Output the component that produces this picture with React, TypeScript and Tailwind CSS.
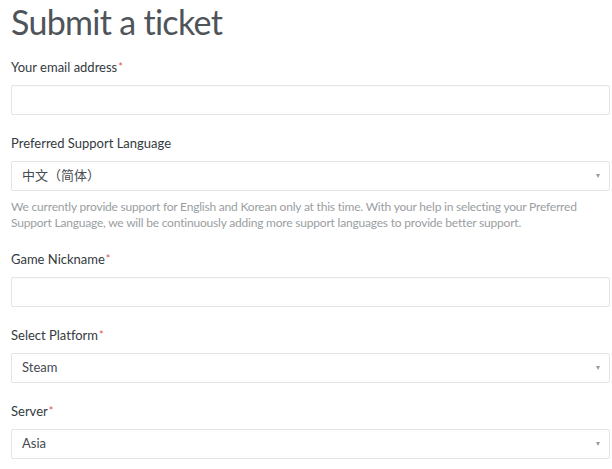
import React from 'react';

const font = { fontFamily: 'Lato, "Noto Sans CJK SC", sans-serif', fontVariantLigatures: 'none' as const };

function Label({ text, required }: { text: string; required?: boolean }) {
  return (
    <label className="block h-[20px] text-[13px] leading-[20px] text-[#333a40] mb-[8px]">
      {text}
      {required && <span className="text-[#e0545a] text-[11px] align-top ml-[1px]">*</span>}
    </label>
  );
}

function TextBox() {
  return (
    <input
      type="text"
      className="block w-full h-[30px] border border-[#e4e4e4] rounded-[2px] bg-white outline-none shadow-[inset_0_1px_1px_rgba(0,0,0,0.02)]"
    />
  );
}

function SelectBox({ value }: { value: string }) {
  return (
    <div className="flex items-center justify-between w-full h-[30px] border border-[#e4e4e4] rounded-[2px] bg-white pl-[10px] pr-[9px]">
      <span className="text-[13px] text-[#444a50]">{value}</span>
      <span className="w-0 h-0 border-l-[2.5px] border-r-[2.5px] border-t-[4px] border-l-transparent border-r-transparent border-t-[#9a9a9a]" />
    </div>
  );
}

export default function App() {
  return (
    <div className="bg-white w-[612px] h-[469px] overflow-hidden pl-[11px] pr-[2px]" style={font}>
      <h1 className="text-[34px] leading-[44px] tracking-[-0.7px] text-[#4e5459] font-normal pt-0 mb-[13px]">Submit a ticket</h1>

      <Label text="Your email address" required />
      <TextBox />

      <div className="mt-[18px]">
        <Label text="Preferred Support Language" />
        <SelectBox value="中文（简体）" />
        <p className="mt-[8px] text-[12px] leading-[16px] tracking-[-0.2px] text-[#9a9ea2]">
          We currently provide support for English and Korean only at this time. With your help in selecting your Preferred Support Language, we will be continuously adding more support languages to provide better support.
        </p>
      </div>

      <div className="mt-[18px]">
        <Label text="Game Nickname" required />
        <TextBox />
      </div>

      <div className="mt-[18px]">
        <Label text="Select Platform" required />
        <SelectBox value="Steam" />
      </div>

      <div className="mt-[18px]">
        <Label text="Server" required />
        <SelectBox value="Asia" />
      </div>
    </div>
  );
}
